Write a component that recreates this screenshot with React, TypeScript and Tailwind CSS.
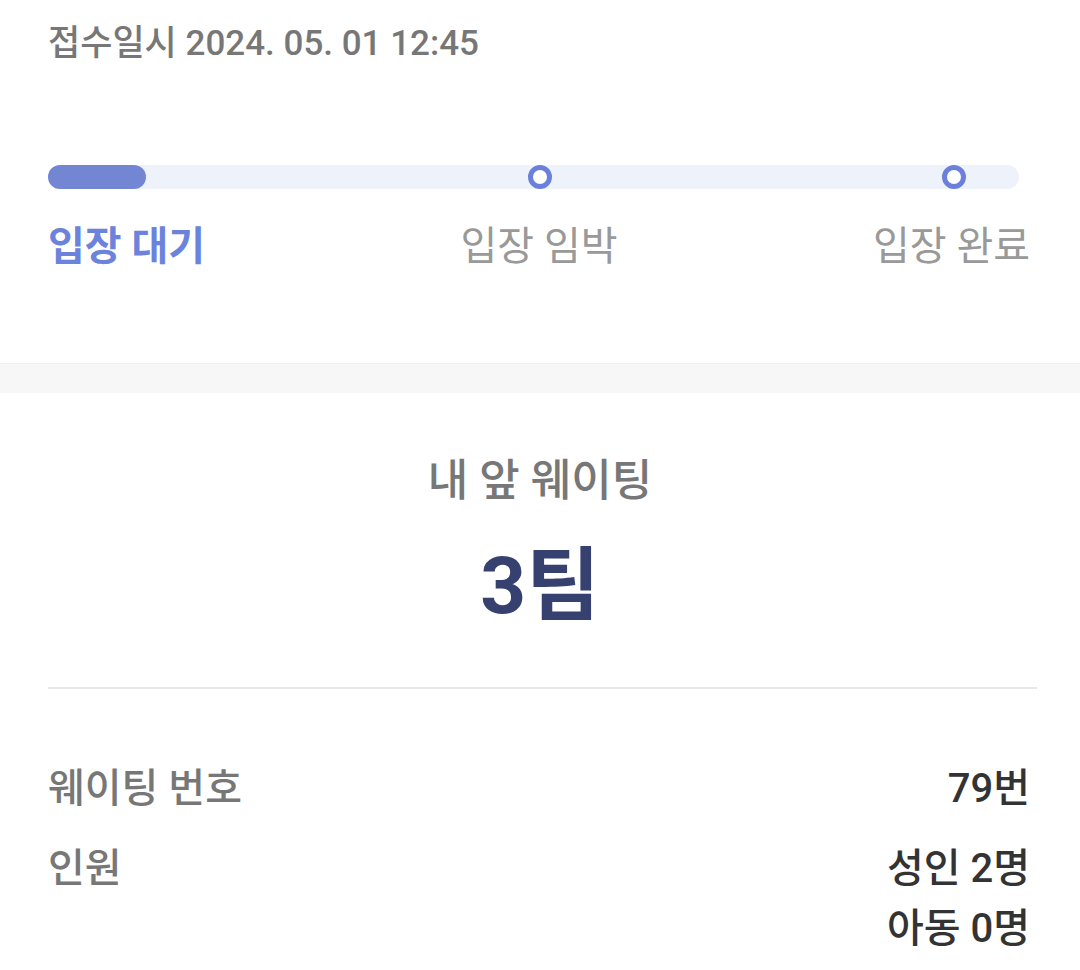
const font = "font-['Roboto','Noto_Sans_CJK_KR',sans-serif]";

const Dot = ({ left }: { left: string }) => (
  <span
    className={`absolute top-1/2 -translate-y-1/2 ${left} size-[24px] rounded-full border-[5px] border-[#6a80dc] bg-white`}
  />
);

const InfoRow = ({ label, values }: { label: string; values: string[] }) => (
  <div className="flex justify-between">
    <span className="text-[40px] leading-[60px] text-[#777] font-medium">{label}</span>
    <div className="flex flex-col items-end">
      {values.map((v) => (
        <span key={v} className="text-[40px] leading-[60px] text-[#333] font-medium">
          {v}
        </span>
      ))}
    </div>
  </div>
);

export default function App() {
  return (
    <div className={`${font} w-[1080px] min-h-[970px] bg-white overflow-hidden`}>
      <section className="px-[48px] pt-[19px] h-[363px]">
        <p className="text-[35px] leading-[50px] font-medium text-[#777]">
          접수일시 2024. 05. 01 12:45
        </p>

        <div className="relative mt-[96px] h-[24px] w-[971px] rounded-full bg-[#eef2fa]">
          <div className="h-full w-[98px] rounded-full bg-[#7286d4]" />
          <Dot left="left-[480px]" />
          <Dot left="left-[894px]" />
        </div>

        <div className="grid grid-cols-3 w-[982px] mt-[29px] text-[40px] leading-[58px]">
          <span className="text-left font-bold text-[#6b83dc]">입장 대기</span>
          <span className="text-center text-[#999]">입장 임박</span>
          <span className="text-right text-[#999]">입장 완료</span>
        </div>
      </section>

      <div className="h-[30px] border-t border-[#f0f0f0] bg-[#f7f7f7]" />

      <section className="px-[48px] pt-[60px]">
        <div className="flex flex-col items-center">
          <p className="text-[44px] leading-[56px] font-medium text-[#777]">내 앞 웨이팅</p>
          <p className="mt-[29px] text-[80px] leading-[96px] font-bold text-[#364170]">3팀</p>
        </div>

        <div className="mt-[53px] h-[2px] w-[989px] bg-[#e8e8e8]" />

        <div className="mt-[70px] flex flex-col gap-[20px] w-[982px]">
          <InfoRow label="웨이팅 번호" values={["79번"]} />
          <InfoRow label="인원" values={["성인 2명", "아동 0명"]} />
        </div>
      </section>
    </div>
  );
}
